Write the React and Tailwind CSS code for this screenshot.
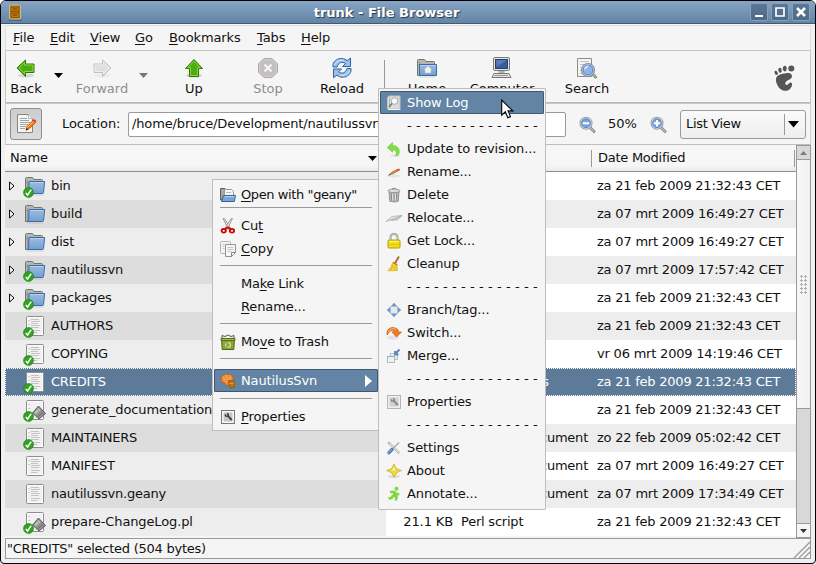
import React from "react";

/* ---------- Icons ---------- */

function Cabinet() {
  return (
    <svg width="16" height="17" viewBox="0 0 16 17">
      <rect x="2.500" y="1" width="11" height="14" rx="1" fill="#c17d11" stroke="#cdb98c" />
      <rect x="4" y="3" width="8" height="4.500" fill="#b9770c" stroke="#7d5109" strokeWidth=".8" />
      <rect x="4" y="9" width="8" height="4.500" fill="#b9770c" stroke="#7d5109" strokeWidth=".8" />
      <path d="M6 5h4M6 11h4" stroke="#6a4405" />
      <path d="M2 16.300h13" stroke="#3d5065" strokeWidth=".7" />
    </svg>
  );
}

function GreenArrow({ className = "", muted = false }) {
  return (
    <svg width="22" height="22" viewBox="0 0 22 22" className={className}>
      <ellipse cx="11" cy="18.500" rx="8" ry="2" fill="#000" opacity={muted ? 0.04 : 0.12} />
      <path
        d="M2 11L10.500 3v4h8.500v8.500h-8.500v4z"
        fill={muted ? "#dfe1de" : "#4eae10"}
        stroke={muted ? "#bfc1be" : "#2b7804"}
      />
      <path d="M4 11L9.500 5.500V8H18v6.500H9.500V17z" fill="none" stroke={muted ? "#eceeeb" : "#8fdc4c"} strokeWidth=".9" />
    </svg>
  );
}

function UpArrow() {
  return (
    <svg width="22" height="22" viewBox="0 0 22 22">
      <ellipse cx="11" cy="18.500" rx="8" ry="2" fill="#000" opacity=".15" />
      <path d="M11 2.500L19.500 11.500h-4v8h-9v-8h-4z" fill="#4eae10" stroke="#2b7804" />
      <path d="M11 4.200L17.200 10.600h-2.700v8h-7v-8H4.800z" fill="none" stroke="#8fdc4c" strokeWidth=".9" />
    </svg>
  );
}

function StopIcon() {
  return (
    <svg width="22" height="22" viewBox="0 0 22 22">
      <path d="M7 1.500h8l5.500 5.500v8L15 20.500H7L1.500 15V7z" fill="#c3bfbf" stroke="#aba7a7" />
      <path d="M7.500 2.700h7L19.300 7.500v7L14.500 19.300h-7L2.700 14.500v-7z" fill="none" stroke="#d6d2d2" />
      <path d="M7.500 7.500l7 7M14.500 7.500l-7 7" stroke="#f4f4f4" strokeWidth="2.400" />
    </svg>
  );
}

function ReloadIcon() {
  return (
    <svg width="22" height="22" viewBox="0 0 22 22">
      <path d="M2 10V7.500C3 3.500 7 1.200 11 1.500c2.300.2 3.800 1 5 2.200L19.500 1v8.500h-8l3-3C11.500 4.500 7.500 5 6 10z" fill="#9dbfe6" stroke="#2c64ab" strokeWidth="1" />
      <path d="M20 11.500V14c-1 4-5 6.500-9 6.200-2.300-.2-3.800-1-5-2.200L2.500 20.700V12h8l-3 3c3 2 7 1.500 8.500-3.500z" fill="#9dbfe6" stroke="#2c64ab" strokeWidth="1" />
      <path d="M3.500 8C5 4 9 2.500 13 3.200M18.500 13.500C17 17.500 13 19 9 18.300" stroke="#dceafa" fill="none" />
    </svg>
  );
}

function Folder({ home = false, size = 22 }) {
  return (
    <svg width={size} height={size} viewBox="0 0 22 22">
      <defs>
        <linearGradient id="folderFront" x1="0" y1="0" x2="0" y2="1">
          <stop offset="0" stopColor="#9dbce0" />
          <stop offset="1" stopColor="#729fcf" />
        </linearGradient>
      </defs>
      <path d="M3 20h16.500" stroke="#000" opacity=".12" />
      <path d="M1.500 18.500V3.500q0-1 1-1H8.500l1.500 2H17.500q1 0 1 1V18z" fill="#b4b6b0" stroke="#73756f" />
      <path d="M3.500 5v12M2 7.500h3" stroke="#8f918b" strokeWidth=".8" />
      <path
        d={home ? "M3.500 7.500H20.500V18.500H3.500z" : "M5 6.500H20.700L19.500 17.500Q19.400 18.500 18.400 18.500H3Q4.500 18 4.600 16.500z"}
        fill="url(#folderFront)"
        stroke="#3a6cab"
      />
      <path d={home ? "M4.500 8.500h15" : "M6 7.500h13.500"} stroke="#c0d5ed" strokeWidth=".8" />
      {home && <path d="M12 9l4 3.500-1 .3v3.200H9v-3.200l-1-.3z" fill="#f1f1ee" stroke="#aebbc9" strokeWidth=".5" />}
    </svg>
  );
}

function ComputerIcon() {
  return (
    <svg width="22" height="22" viewBox="0 0 22 22">
      <rect x="2.500" y=".5" width="16" height="13" rx="1.500" fill="#e6e6e2" stroke="#777974" />
      <rect x="4.500" y="2.500" width="12" height="9" fill="#3a5c9d" stroke="#263f70" />
      <path d="M5 3h11L5.500 10z" fill="#6d8fc8" opacity=".6" />
      <path d="M7.500 14h6v2h-6z" fill="#b1b3ae" />
      <path d="M3 16.500h15l2 4H1z" fill="#e1e1de" stroke="#777974" />
      <path d="M3.500 18.500h13.500" stroke="#999b96" />
    </svg>
  );
}

function Lens({ sign, size = 17 }) {
  return (
    <svg width={size} height={size} viewBox="0 0 17 17">
      <path d="M11.500 12l3.500 3.500" stroke="#7f817c" strokeWidth="2.800" strokeLinecap="round" />
      <path d="M11.600 12.100l3.200 3.200" stroke="#c4c6c1" strokeWidth="1.100" strokeLinecap="round" />
      <circle cx="7" cy="7.200" r="6" fill="#d9e5f3" stroke="#9fa19c" strokeWidth="1.100" />
      <circle cx="7" cy="7.200" r="4.400" fill="#79a5dc" stroke="#4a7fc4" strokeWidth=".9" />
      <path d="M3.800 7.200h6.400" stroke="#fff" strokeWidth="2" />
      {sign === "plus" && <path d="M7 4v6.400" stroke="#fff" strokeWidth="2" />}
    </svg>
  );
}

function SearchIcon() {
  return (
    <svg width="22" height="22" viewBox="0 0 22 22">
      <path d="M1.500 1.500h14v18h-14z" fill="#f4f4f3" stroke="#8b8d88" />
      <path d="M4 4.500h9M4 7.500h5M4 10.500h3M4 13.500h3M4 16.500h4" stroke="#c3c5c0" />
      <path d="M16 16.500l3.500 3.500" stroke="#7d7f7a" strokeWidth="3" strokeLinecap="round" />
      <path d="M16.500 17l2.800 2.800" stroke="#c4c6c1" strokeWidth="1.100" strokeLinecap="round" />
      <circle cx="12" cy="13" r="6.500" fill="#d2e1f2" stroke="#858a90" strokeWidth="1.100" />
      <circle cx="12" cy="13" r="4.900" fill="#8db6e6" stroke="#4d82c4" />
      <path d="M8.800 12.300q.7-3 3.600-3" stroke="#e6f1fc" strokeWidth="1.500" fill="none" />
    </svg>
  );
}

function Foot() {
  return (
    <svg width="21" height="27" viewBox="0 0 21 27">
      <g fill="#565656">
        <ellipse cx="17.300" cy="3.600" rx="3" ry="3" />
        <ellipse cx="10.700" cy="3.600" rx="2" ry="2.800" transform="rotate(8 10.700 3.600)" />
        <ellipse cx="6" cy="5.300" rx="1.700" ry="2.500" transform="rotate(-10 6 5.300)" />
        <ellipse cx="2.200" cy="7.800" rx="1.500" ry="2.200" transform="rotate(-25 2.200 7.800)" />
        <path d="M12 8.200C17 7.500 18.500 10 17.800 12.300 17 15 12 15 11.300 18c-.5 2.300 2.500 2.600 3.600.5.700-1.500 3.600-1.300 3.200 1.200C17.500 24 13.500 26.500 9.700 25.700 5 24.500 1.500 18.500 2 14 2.500 9.500 7.500 8.800 12 8.200z" />
      </g>
    </svg>
  );
}

function EditIcon() {
  return (
    <svg width="22" height="22" viewBox="0 0 22 22">
      <path d="M2.500 1.500h11l4 4v14h-15z" fill="#f4f4f2" stroke="#84867f" />
      <path d="M13.500 1.500v4h4" fill="#fff" stroke="#b5b7b2" />
      <path d="M5 5.500h7M5 7.500h9M5 9.500h10M5 11.500h8M5 13.500h6M5 15.500h5" stroke="#a4a6a1" />
      <path d="M11 17l1-3.500 6.500-6.500 2.200 2.200-6.500 6.500z" fill="#f47900" stroke="#b35000" strokeWidth=".8" />
      <path d="M12.500 14.500l6-6" stroke="#ffc169" />
      <path d="M10.800 17.500l.8-2.700 1.800 1.900z" fill="#3a2b14" />
      <path d="M18 7.200l1.300-1.300 2 2-1.200 1.300z" fill="#d33" />
    </svg>
  );
}

function DocIcon({ script }) {
  return (
    <svg width="22" height="22" viewBox="0 0 22 22">
      <rect x="2.500" y="1.500" width="17" height="19" rx="1" fill="#f1f1f1" stroke="#8e8e8e" />
      <rect x="3.500" y="2.500" width="15" height="17" fill="none" stroke="#fcfcfc" />
      <path d="M4.500 5.500h1M4.500 9.500h1" stroke="#aaa" />
      {!script && <path d="M7 4.500h8M7 6.500h9M7 8.500h7M7 10.500h9M7 12.500h8M7 15.500h9M7 17.500h6" stroke="#c4c4c4" />}
      {script && (
        <>
          <path d="M8.500 14L14.500 7l7 7.500-6.500 5.500z" fill="#8e8e8e" stroke="#5e5e5e" />
          <path d="M10 13.800L14.500 9l2 2-4.500 4.500z" fill="#bcbcbc" />
          <path d="M13.500 18l6-5" stroke="#6f6f6f" />
        </>
      )}
    </svg>
  );
}

function CheckEmblem() {
  return (
    <svg width="11" height="11" viewBox="0 0 11 11" className="absolute -left-[1px] top-[12px]">
      <circle cx="5.500" cy="5.500" r="5" fill="#2ea31f" stroke="#1d8412" strokeWidth=".6" />
      <path d="M2.700 6l1.900 2L8.200 2.700" stroke="#fff" strokeWidth="1.500" fill="none" />
    </svg>
  );
}

const MENU_ICONS = {
  open: (
    <>
      <path d="M.5 13V1.500H5l1 1.500h2v9z" fill="#a5a7a1" stroke="#5d5f59" />
      <path d="M4.500 2.500h7l2 2v6h-9z" fill="#f5f5f4" stroke="#999" />
      <path d="M6 5.500h5" stroke="#bbb" />
      <path d="M3.500 8.500h12l-1.200 6H1.500z" fill="#79a5da" stroke="#3465a4" />
      <path d="M4.500 9.600h10" stroke="#b9d1ec" />
    </>
  ),
  cut: (
    <>
      <path d="M3 .5l1.300-.2L10.500 10 8.500 11.500z" fill="#e3e3e1" stroke="#888a85" strokeWidth=".8" />
      <path d="M12.500.5L11.300.3 5 10l2 1.500z" fill="#eee" stroke="#888a85" strokeWidth=".8" />
      <ellipse cx="3.700" cy="12.800" rx="2.100" ry="1.800" fill="none" stroke="#cc0a0a" strokeWidth="1.900" />
      <ellipse cx="12" cy="12.800" rx="2.100" ry="1.800" fill="none" stroke="#cc0a0a" strokeWidth="1.900" />
      <path d="M5 11l2.700-1.800 2.900 1.800" stroke="#cc0a0a" strokeWidth="1.800" fill="none" />
    </>
  ),
  copy: (
    <>
      <rect x=".5" y=".5" width="10" height="12" rx="1" fill="#f3f3f3" stroke="#b5b5b5" />
      <path d="M2.500 3.500h2M2.500 5.500h2M2.500 7.500h2" stroke="#ccc" />
      <path d="M5.500 3.500h10v8l-4 4h-6z" fill="#f6f6f5" stroke="#94968f" />
      <path d="M7.500 6.500h6M7.500 8.500h6M7.500 10.500h4" stroke="#c4c4c4" />
      <path d="M15.500 11.500h-4v4z" fill="#fff" stroke="#888a85" />
    </>
  ),
  trash: (
    <>
      <path d="M1.500 5h13l-.7 10.500H2.200z" fill="#8aa63a" stroke="#4d6611" />
      <path d="M2 4.500V1.500l3 1L8 1l3 1.500 3-1v3z" fill="#f1f1ef" stroke="#444" strokeWidth=".9" />
      <path d="M1 4.500h14v2H1z" fill="#a6bd50" stroke="#4d6611" strokeWidth=".9" />
      <circle cx="8" cy="11" r="2.400" fill="none" stroke="#d3e0a2" strokeWidth="1.200" strokeDasharray="3.600 1.400" />
    </>
  ),
  shell: (
    <>
      <path d="M1 6C1.500 2 5 .8 8 1.200c4 .4 5.500 3 5.500 5.800L9 8.500V12L7 13 5 10.500 2 9z" fill="#f08a35" stroke="#b55a10" strokeWidth=".7" />
      <path d="M3 4l4 5M6 2l2.500 6M10 2v6" stroke="#fbbd80" strokeWidth=".7" />
      <path d="M8.500 7.500h6v7h-5z" fill="#b87412" stroke="#8a560a" strokeWidth=".7" />
      <path d="M9.500 10.500h4" stroke="#e0a040" />
    </>
  ),
  props: (
    <>
      <rect x="1.500" y="1.500" width="13" height="13" fill="#f6f6f6" stroke="#777" />
      <rect x="3.500" y="3.500" width="9" height="9" fill="#c5c5c5" />
      <path d="M5 4.500q-1 2.500 1 3.500l1.500-.3 3.500 4 1.500-1.500-3.500-3.500q.3-3-2.500-3l1 2-1 1z" fill="#3f3f3f" />
    </>
  ),
  propsLight: (
    <>
      <rect x="1.500" y="1.500" width="13" height="13" fill="#efefef" stroke="#b5b5b5" />
      <rect x="3.500" y="3.500" width="9" height="9" fill="#d0d0d0" />
      <path d="M5 4.500q-1 2.500 1 3.500l1.500-.3 3.500 4 1.500-1.500-3.500-3.500q.3-3-2.500-3l1 2-1 1z" fill="#858585" />
    </>
  ),
  log: (
    <>
      <path d="M1.500 2.500l1.500-1.500h11v13H1.500z" fill="#dcdcda" stroke="#c3c5c0" />
      <path d="M3.500 2v11" stroke="#b4b6b1" />
      <circle cx="8.500" cy="6" r="3.200" fill="#f7f9fb" stroke="#b0b2ad" strokeWidth="1.100" />
      <path d="M6 8.500l-3 3.500" stroke="#777" strokeWidth="1.500" />
      <path d="M2 14.500h12.500" stroke="#f4f4f4" />
    </>
  ),
  update: (
    <>
      <ellipse cx="9" cy="14.500" rx="5" ry="1.200" fill="#000" opacity=".08" />
      <path d="M1.200 6.500L6.500 1.500v3C11.500 4.300 14.500 8 12.800 13c-.7 1.500-2 2-3.300 1.700C11.300 12 10.500 9 6.500 8.700V11.200z" fill="#84dc48" stroke="#6cc22f" strokeWidth=".6" />
    </>
  ),
  rename: (
    <>
      <ellipse cx="8" cy="12" rx="6" ry="1.500" fill="#000" opacity=".07" />
      <path d="M3.500 10.500L5.500 8.300l6-3 .9 1.400-6 3.300z" fill="#e0913c" stroke="#975317" strokeWidth=".6" />
      <path d="M11.300 5.400l1.800-.9.900 1.400-1.700 1z" fill="#d33c2a" />
      <path d="M2 11.500l1.500-1.400 1 .9z" fill="#222" />
    </>
  ),
  delete: (
    <>
      <path d="M3 5h10l-.8 9.300q-4.200 1.400-8.400 0z" fill="#b9b9b9" stroke="#858585" strokeWidth=".8" />
      <path d="M5.300 6.500l.4 7M8 6.500v7.500M10.700 6.500l-.4 7" stroke="#858585" strokeWidth=".9" />
      <path d="M6.700 6.500v7M9.400 6.500v7" stroke="#ebebeb" strokeWidth=".9" />
      <ellipse cx="8" cy="3.800" rx="5.800" ry="1.900" fill="#dcdcdc" stroke="#858585" strokeWidth=".8" />
      <path d="M6 2q2-1.800 4 0" fill="none" stroke="#858585" />
    </>
  ),
  relocate: (
    <>
      <path d="M0 11.500L6 6.500 16 5.500 5 10z" fill="#e6e6e5" stroke="#b0b0ae" strokeWidth=".8" />
      <path d="M5 10L16 5.500l-4.500 4.500-5.500.5z" fill="#cccccb" stroke="#a6a6a4" strokeWidth=".6" />
    </>
  ),
  lock: (
    <>
      <path d="M4.500 8V5q0-4 3.500-4t3.500 4v3" fill="none" stroke="#94968f" strokeWidth="2" />
      <path d="M4.500 7V5q0-4 3.500-4t3.500 4v3" fill="none" stroke="#dcded9" strokeWidth=".7" />
      <rect x="2" y="7" width="12" height="8" rx="1" fill="#f2dc1e" stroke="#b89e06" />
      <path d="M3 8.500h10" stroke="#fff487" />
      <path d="M3 11.500h10" stroke="#e2c80a" />
    </>
  ),
  cleanup: (
    <>
      <path d="M12.500 1.200L9.500 6.500" stroke="#b0701a" strokeWidth="1.900" strokeLinecap="round" />
      <path d="M7 6.500l4 2.500.3 5.500-9.300.3Q4.300 12.500 7 6.500z" fill="#f2d736" stroke="#d0ae10" strokeWidth=".7" />
      <path d="M7 6.300l4.200 2.600" stroke="#c46a42" strokeWidth="1.300" />
      <path d="M7 9l-2 5M9 10v4" stroke="#cfac18" strokeWidth=".7" />
    </>
  ),
  branch: (
    <>
      <path d="M8 1L10.500 4h-5zM8 15L5.500 12h5zM1 8L4 5.500v5zM15 8L12 10.500v-5z" fill="#7099cf" stroke="#5583bf" strokeWidth=".4" />
      <rect x="4.500" y="4.500" width="7" height="7" fill="#e4e9ed" stroke="#b4bcc5" />
    </>
  ),
  switch: (
    <>
      <ellipse cx="7" cy="12.500" rx="6" ry="2" fill="#000" opacity=".08" />
      <path d="M1.200 10C-.5 3.500 7 0 12 4.800l.4 2.200H15.500L10.500 12 6 7h2.500C7.500 5 4 4.500 1.200 10z" fill="#ee7a1c" stroke="#c75a0c" strokeWidth=".7" />
      <path d="M2 7Q5 2.500 9.500 4.200" stroke="#ffc08b" fill="none" />
    </>
  ),
  merge: (
    <>
      <rect x="4.500" y="5.500" width="7" height="6" fill="#e8ebee" stroke="#bdc4cb" />
      <rect x="1.500" y="8.500" width="7" height="6" fill="#eef0f2" stroke="#b3bac1" />
      <path d="M1.500 8.500h7" stroke="#8eacd2" />
      <path d="M13.500 1.500L9 6m0-3v3.500h3.500" stroke="#5a86c0" strokeWidth="1.900" fill="none" />
    </>
  ),
  settings: (
    <>
      <path d="M3 3l9.500 9.500" stroke="#9b9d98" strokeWidth="2.400" strokeLinecap="round" />
      <path d="M3 3l9.800 9.800" stroke="#e6e7e5" strokeWidth="1.300" />
      <path d="M13 2.500L7 8.500" stroke="#a8aaa5" strokeWidth="1.500" />
      <path d="M6 9.500l-3 3.200" stroke="#5580b8" strokeWidth="3.400" strokeLinecap="round" />
      <path d="M5.800 9.200l-3 3.300" stroke="#94b7e2" strokeWidth="1" />
    </>
  ),
  about: (
    <>
      <ellipse cx="8" cy="13.500" rx="6" ry="1.600" fill="#000" opacity=".1" />
      <path d="M8 .8L10 5.500 15.500 7.500 10.500 9.800 8 14.500 5.700 9.800.5 7.500 6 5.500z" fill="#edd940" stroke="#cdb22a" strokeWidth=".8" strokeLinejoin="round" />
      <path d="M8 3.500L9.200 7.200h-3z" fill="#fff9c5" />
    </>
  ),
  annotate: (
    <>
      <circle cx="10.500" cy="2.800" r="2" fill="#7fd640" />
      <path d="M4 6h5L7.700 9.500l3 1.700-1 3.300M8.500 6.500l2.200 2L13.300 7.800M7 9.500L5.500 12 2.500 12.500" stroke="#7fd640" strokeWidth="2.500" fill="none" strokeLinejoin="round" />
    </>
  ),
};

function MenuIcon({ name }) {
  return (
    <svg width="16" height="16" viewBox="0 0 16 16" className="shrink-0">
      {MENU_ICONS[name]}
    </svg>
  );
}

/* Splits a label at "_" and underlines the letter that follows. */
function Mnemonic({ children, className = "" }) {
  const i = children.indexOf("_");
  if (i < 0) return <span className={className}>{children}</span>;
  return (
    <span className={className}>
      {children.slice(0, i)}
      <span className="underline decoration-1 underline-offset-2">{children[i + 1]}</span>
      {children.slice(i + 2)}
    </span>
  );
}

/* ---------- Window chrome ---------- */

function TitleButton({ children }) {
  return (
    <div className="flex h-[18px] w-[18px] items-center justify-center rounded-[2px] border border-[#86a1bd] bg-linear-to-b from-[#5a7894] to-[#4d6a86]">
      <svg width="16" height="16" viewBox="0 0 16 16" fill="none" stroke="#fff" strokeWidth="2" className="shrink-0">
        {children}
      </svg>
    </div>
  );
}

function TitleBar() {
  return (
    <div className="flex h-[23px] shrink-0 items-center border-b border-[#3f5a76] bg-linear-to-b from-[#87a5c4] to-[#6284a5] pl-[6px] pr-[5px]">
      <Cabinet />
      <div className="flex-1 pt-px text-center text-[13px] font-bold tracking-normal text-white [text-shadow:1px_1px_1px_#26384a]">
        trunk - File Browser
      </div>
      <div className="flex gap-[3px]">
        <TitleButton><path d="M4 12h8" /></TitleButton>
        <TitleButton><path d="M4 4h8v8H4z" strokeWidth="1.700" /></TitleButton>
        <TitleButton><path d="M4 4l8 8M12 4l-8 8" strokeWidth="2.600" /></TitleButton>
      </div>
    </div>
  );
}

function MenuBar() {
  const items = [
    ["_File", "w-[37px]"],
    ["_Edit", "w-[40px]"],
    ["_View", "w-[45px]"],
    ["_Go", "w-[34px]"],
    ["_Bookmarks", "w-[88px]"],
    ["_Tabs", "w-[44px]"],
    ["_Help", "w-[40px]"],
  ];
  return (
    <div className="flex h-[26px] shrink-0 items-center border border-[#dedede] border-b-[#c4c4c4] pl-[7px]">
      {items.map(([label, w]) => (
        <div key={label} className={w}><Mnemonic>{label}</Mnemonic></div>
      ))}
    </div>
  );
}

function Tool({ icon, label, width, muted }) {
  return (
    <div className={`flex h-full flex-col items-center pt-[6px] tracking-normal ${width} ${muted ? "text-[#8e8e8e]" : ""}`}>
      {icon}
      <div className="leading-[20px]">{label}</div>
    </div>
  );
}

function Caret({ color = "#000", className = "" }) {
  return (
    <svg width="9" height="5" viewBox="0 0 9 5" className={className}>
      <path d="M0 0h9L4.500 5z" fill={color} />
    </svg>
  );
}

function Toolbar() {
  return (
    <div className="flex h-[52px] shrink-0 border border-t-0 border-[#c6c6c6] border-b-[#b9b9b9]">
      <Tool width="w-[40px]" icon={<GreenArrow />} label="Back" />
      <div className="w-[22px] pl-[8px] pt-[22px]"><Caret /></div>
      <Tool width="w-[68px]" icon={<GreenArrow muted className="-scale-x-100" />} label="Forward" muted />
      <div className="w-[22px] pl-[3px] pt-[22px]"><Caret color="#777" /></div>
      <Tool width="w-[72px]" icon={<UpArrow />} label="Up" />
      <Tool width="w-[76px]" icon={<StopIcon />} label="Stop" muted />
      <Tool width="w-[72px]" icon={<ReloadIcon />} label="Reload" />
      <div className="ml-[6px] mt-[9px] h-[38px] w-[13px] border-l border-l-[#999]" />
      <Tool width="w-[60px]" icon={<Folder home />} label="Home" />
      <Tool width="w-[90px]" icon={<ComputerIcon />} label="Computer" />
      <Tool width="w-[80px]" icon={<SearchIcon />} label="Search" />
      <div className="ml-auto pr-[15px] pt-[14px]"><Foot /></div>
    </div>
  );
}

function LocationBar() {
  return (
    <div className="flex h-[42px] shrink-0 items-center border border-[#d0d0d0] border-t-[#c9c9c9] border-b-[#bdbdbd] pl-1 pr-[4px]">
      <div className="flex h-[32px] w-[32px] items-center justify-center rounded-[3px] border border-[#8f8f8f] bg-linear-to-b from-[#cdcdcd] to-[#dcdcdc]">
        <EditIcon />
      </div>
      <div className="w-[86px] pl-[20px]">Location:</div>
      <div className="flex h-[25px] w-[438px] items-center rounded-[2px] border border-[#9a9a9a] bg-white pl-[3px] tracking-[-0.14px]">
        /home/bruce/Development/nautilussvn/trunk
      </div>
      <div className="pl-[13px]"><Lens sign="minus" /></div>
      <div className="w-[54px] pl-[12px] tracking-normal">50%</div>
      <Lens sign="plus" />
      <div className="ml-auto flex h-[29px] w-[126px] items-center rounded-[3px] border border-[#999] bg-linear-to-b from-[#fafafa] to-[#eeeeee] pl-[5px]">
        <div className="flex-1 tracking-[-0.32px]">List View</div>
        <div className="flex h-[21px] w-[21px] items-center border-l border-[#999] pl-[3px]">
          <svg width="11" height="7" viewBox="0 0 11 7"><path d="M0 0h11L5.500 6.500z" fill="#000" /></svg>
        </div>
      </div>
    </div>
  );
}

/* ---------- File list ---------- */

const ROWS = [
  { name: "bin", kind: "folder", svn: true, date: "za 21 feb 2009 21:32:43 CET" },
  { name: "build", kind: "folder", date: "za 07 mrt 2009 16:49:27 CET" },
  { name: "dist", kind: "folder", date: "za 07 mrt 2009 16:49:27 CET" },
  { name: "nautilussvn", kind: "folder", svn: true, date: "za 07 mrt 2009 17:57:42 CET" },
  { name: "packages", kind: "folder", svn: true, date: "za 21 feb 2009 21:32:43 CET" },
  { name: "AUTHORS", kind: "text", svn: true, date: "za 21 feb 2009 21:32:43 CET" },
  { name: "COPYING", kind: "text", svn: true, date: "vr 06 mrt 2009 14:19:46 CET" },
  { name: "CREDITS", kind: "text", svn: true, type: "author credits", date: "za 21 feb 2009 21:32:43 CET", selected: true },
  { name: "generate_documentation", kind: "script", svn: true, date: "za 21 feb 2009 21:32:43 CET" },
  { name: "MAINTAINERS", kind: "text", svn: true, type: "plain text document", date: "zo 22 feb 2009 05:02:42 CET" },
  { name: "MANIFEST", kind: "text", type: "plain text document", date: "za 07 mrt 2009 16:49:27 CET" },
  { name: "nautilussvn.geany", kind: "text", type: "plain text document", date: "za 07 mrt 2009 17:34:49 CET" },
  { name: "prepare-ChangeLog.pl", kind: "script", svn: true, size: "21.1 KB", type: "Perl script", date: "za 21 feb 2009 21:32:43 CET" },
];

function FileRow({ row, odd }) {
  const nameBg = row.selected ? "" : odd ? "bg-[#dddddd]" : "bg-[#ededed]";
  const restBg = row.selected ? "" : odd ? "bg-[#ededed]" : "bg-white";
  const tight = row.name.startsWith("nautilussvn") || row.name === row.name.toUpperCase();
  return (
    <div className={`flex h-[28px] shrink-0 ${row.selected ? "border border-dotted border-white bg-[#5d7b99] text-white" : ""}`}>
      <div className={`flex items-center ${row.selected ? "w-[380px] pl-[3px]" : "w-[381px] pl-[4px]"} ${nameBg}`}>
        <div className="w-[15px]">
          {row.kind === "folder" && (
            <svg width="6" height="10" viewBox="0 0 6 10"><path d="M.6 1L5 5 .6 9z" fill="#fff" stroke="#000" /></svg>
          )}
        </div>
        <div className="relative h-[22px] w-[27px]">
          {row.kind === "folder" ? <Folder /> : <DocIcon script={row.kind === "script"} />}
          {row.svn && <CheckEmblem />}
        </div>
        <span className={`whitespace-nowrap ${tight ? "tracking-[-0.22px]" : ""}`}>{row.name}</span>
      </div>
      <div className={`flex flex-1 items-center whitespace-nowrap ${restBg}`}>
        <div className="w-[67px] text-right">{row.size}</div>
        <div className="w-[144px] pl-[8px] tracking-[-0.22px]">{row.type}</div>
        <div className={row.date.includes("feb") ? "tracking-[-0.23px]" : "tracking-[-0.2px]"}>{row.date}</div>
      </div>
    </div>
  );
}

function Scrollbar() {
  return (
    <div className="flex w-[15px] shrink-0 flex-col border border-[#999] bg-[#d8d8d8]">
      <div className="flex h-[14px] items-center justify-center border-b border-[#999] bg-[#d8d8d8]">
        <svg width="7" height="4" viewBox="0 0 7 4"><path d="M0 4h7L3.500 0z" fill="#7a7a7a" /></svg>
      </div>
      <div className="flex h-[249px] items-center justify-center border-b border-[#999] bg-linear-to-r from-[#f8f8f8] to-[#f0f0f0]">
        <svg width="8" height="19" viewBox="0 0 8 19" fill="#b0b0b0">
          {[0, 4, 8, 12, 16].map((y) => (
            <g key={y}>
              <path d={`M1 ${y}h1v1h1v1h-1v1h-1v-1h-1v-1h1z`} />
              <path d={`M5 ${y}h1v1h1v1h-1v1h-1v-1h-1v-1h1z`} />
            </g>
          ))}
        </svg>
      </div>
      <div className="flex-1" />
      <div className="flex h-[14px] items-center justify-center border-t border-[#999] bg-[#f5f5f5]">
        <svg width="7" height="4" viewBox="0 0 7 4"><path d="M0 0h7L3.500 4z" fill="#333" /></svg>
      </div>
    </div>
  );
}

function FileList() {
  return (
    <div className="flex h-[393px] shrink-0">
      <div className="flex flex-1 flex-col overflow-hidden">
        <div className="flex h-[27px] shrink-0 items-center border-b border-[#8f8f8f] bg-linear-to-b from-[#f6f6f6] from-80% to-[#e9e9e9] pr-px">
          <div className="flex w-[586px] shrink-0 items-center pl-[5px]">
            <span className="w-[358px]">Name</span>
            <Caret />
          </div>
          <div className="flex h-[17px] flex-1 items-center border-x border-[#999] pl-[6px] tracking-[-0.26px]">Date Modified</div>
        </div>
        {ROWS.map((row, i) => (
          <FileRow key={row.name} row={row} odd={i % 2 === 1} />
        ))}
      </div>
      <Scrollbar />
    </div>
  );
}

function StatusBar() {
  return (
    <div className="flex h-[21px] shrink-0 items-center border border-[#999] pl-[1px]">
      <div className="flex-1 tracking-[-0.25px]">"CREDITS" selected (504 bytes)</div>
      <svg width="17" height="17" viewBox="0 0 17 17" className="self-end">
        <path d="M1 17L17 1M6 17L17 6M11 17l6-6" stroke="#999" strokeWidth="1.300" />
      </svg>
    </div>
  );
}

/* ---------- Menus ---------- */

function Rule({ className }) {
  return <div className={`ml-[6px] mr-[6px] border-t border-[#999] ${className}`} />;
}

function ContextItem({ icon, children, className }) {
  return (
    <div className="flex h-[23px] items-center whitespace-nowrap pl-[6px]">
      <div className="w-[21px]">{icon && <MenuIcon name={icon} />}</div>
      <Mnemonic className={className}>{children}</Mnemonic>
    </div>
  );
}

function ContextMenu() {
  return (
    <div className="absolute left-[212px] top-[179px] h-[252px] w-[168px] border border-[#bdbdbd] bg-[#f5f5f5] pl-px pr-px pt-[3px]">
      <ContextItem icon="open" className="tracking-[-0.4px]">{'_Open with "geany"'}</ContextItem>
      <Rule className="mt-px mb-[6px]" />
      <ContextItem icon="cut">Cu_t</ContextItem>
      <ContextItem icon="copy">_Copy</ContextItem>
      <Rule className="mt-[5px] mb-[6px]" />
      <ContextItem className="tracking-[-0.25px]">Ma_ke Link</ContextItem>
      <ContextItem>_Rename...</ContextItem>
      <Rule className="mt-[5px] mb-[6px]" />
      <ContextItem icon="trash" className="tracking-[-0.22px]">Mo_ve to Trash</ContextItem>
      <Rule className="mt-[5px] mb-[10px]" />
      <div className="flex h-[23px] items-center rounded-[1px] border border-[#3f5872] bg-[#6384a4] pl-[5px] text-white">
        <div className="w-[21px]"><MenuIcon name="shell" /></div>
        <span className="w-[124px] tracking-[-0.12px]">NautilusSvn</span>
        <svg width="7" height="12" viewBox="0 0 7 12" className="shrink-0"><path d="M0 0l7 6-7 6z" fill="#fff" /></svg>
      </div>
      <Rule className="mt-[6px] mb-[6px]" />
      <ContextItem icon="props">_Properties</ContextItem>
    </div>
  );
}

const SVN_ITEMS = [
  null,
  ["update", "Update to revision..."],
  ["rename", "Rename..."],
  ["delete", "Delete"],
  ["relocate", "Relocate..."],
  ["lock", "Get Lock..."],
  ["cleanup", "Cleanup"],
  null,
  ["branch", "Branch/tag..."],
  ["switch", "Switch..."],
  ["merge", "Merge..."],
  null,
  ["propsLight", "Properties"],
  null,
  ["settings", "Settings"],
  ["about", "About"],
  ["annotate", "Annotate..."],
];

function SvnMenu() {
  return (
    <div className="absolute left-[378px] top-[88px] h-[422px] w-[168px] rounded-[1px] border border-[#bdbdbd] bg-[#f5f5f5] px-px pt-[2px]">
      <div className="flex h-[23px] items-center rounded-[1px] border border-[#3f5872] bg-[#6384a4] pl-[5px] text-white">
        <div className="w-[21px]"><MenuIcon name="log" /></div>
        <span>Show Log</span>
      </div>
      {SVN_ITEMS.map((item, i) => (
        <div key={i} className="flex h-[23px] items-center whitespace-nowrap pl-[6px]">
          <div className="w-[21px] shrink-0">{item && <MenuIcon name={item[0]} />}</div>
          {item ? <span>{item[1]}</span> : <span className="tracking-normal [word-spacing:.18px]">- - - - - - - - - - - - - - -</span>}
        </div>
      ))}
    </div>
  );
}

function Pointer() {
  return (
    <svg width="13" height="20" viewBox="0 0 13 20" className="absolute left-[501px] top-[99px]">
      <path d="M.7 1v15.200l3.600-3.400 2.500 6 2.700-1.200-2.500-5.700h4.800z" fill="#fff" stroke="#000" strokeWidth="1.100" />
    </svg>
  );
}

export default function App() {
  return (
    <div className="relative h-[564px] w-[816px] overflow-hidden bg-white font-['DejaVu_Sans',sans-serif] text-[13px] leading-[18px] tracking-[-0.12px] text-[#111]">
      <div className="flex h-full flex-col overflow-hidden rounded-t-[6px] rounded-b-[4px] border border-black bg-[#f0f0f0]">
        <TitleBar />
        <div className="mx-[4px] flex flex-col bg-[#f5f5f5] pt-px">
          <MenuBar />
          <Toolbar />
          <LocationBar />
          <FileList />
          <StatusBar />
        </div>
      </div>
      <ContextMenu />
      <SvnMenu />
      <Pointer />
    </div>
  );
}
